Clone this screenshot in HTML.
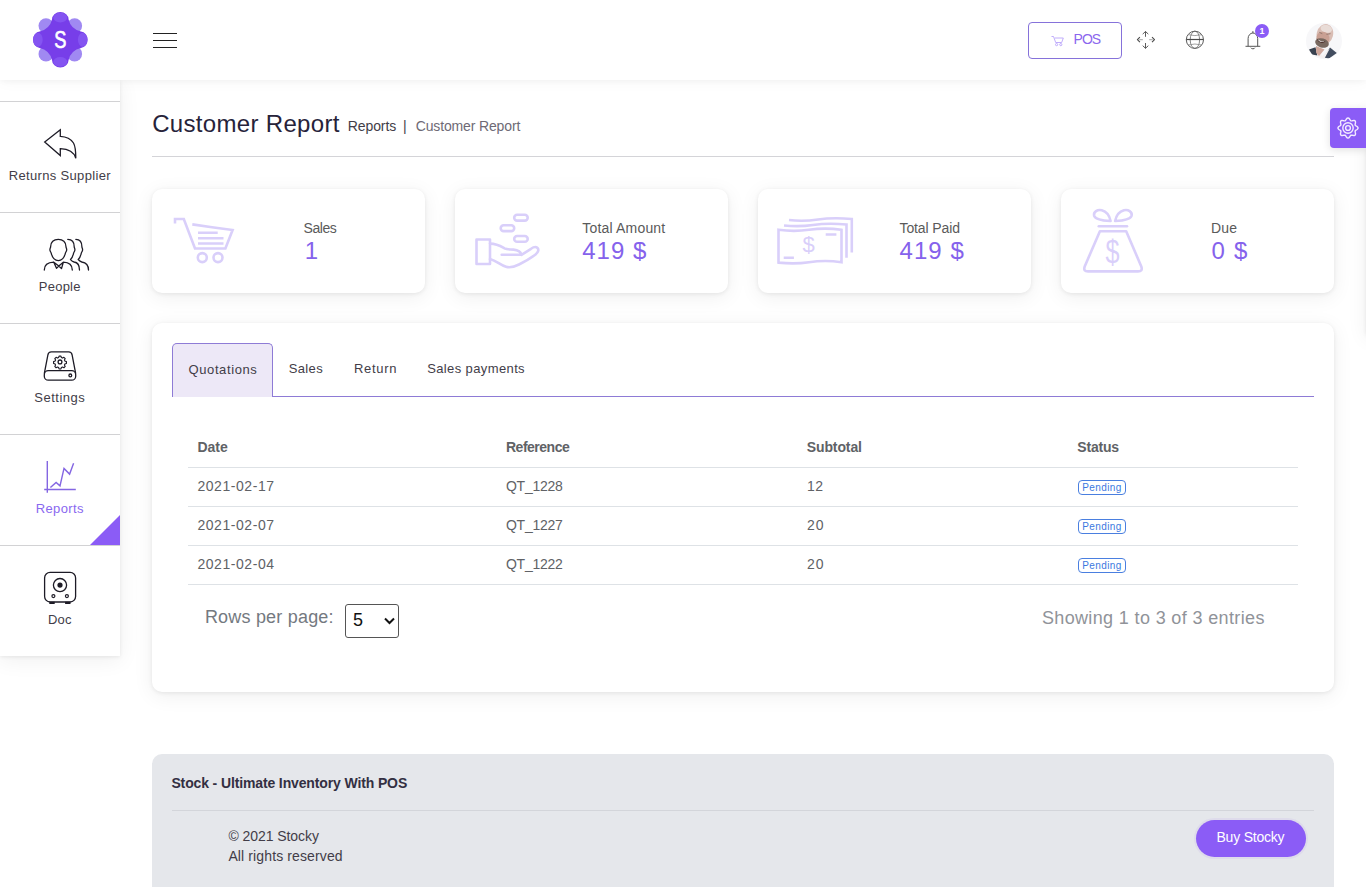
<!DOCTYPE html>
<html lang="en">
<head>
<meta charset="utf-8">
<title>Customer Report - Stocky</title>
<style>
*{box-sizing:border-box;margin:0;padding:0}
html,body{width:1366px;height:887px;overflow:hidden;background:#fff}
body{font-family:"Liberation Sans",sans-serif;color:#332e38;font-size:14px;position:relative}
.abs{position:absolute}
.t{position:absolute;white-space:pre;line-height:1}
/* header */
header{position:absolute;left:0;top:0;width:1366px;height:80px;background:#fff;box-shadow:0 1px 15px rgba(0,0,0,.04),0 1px 6px rgba(0,0,0,.04);z-index:5}
.burger{position:absolute;left:153px;top:32px;width:24px;height:16px}
.burger i{position:absolute;left:0;width:24px;height:1px;background:#222}
.pos{position:absolute;left:1028px;top:22px;width:94px;height:37px;border:1px solid #8672da;border-radius:4px;background:#fff}
.badge1{position:absolute;left:1255px;top:24px;width:14px;height:14px;border-radius:50%;background:#8b5cf6;color:#fff;font-size:9px;font-weight:700;text-align:center;line-height:14px}
/* sidebar */
aside{position:absolute;left:0;top:80px;width:120px;height:576px;background:#fff;box-shadow:0 4px 20px 1px rgba(0,0,0,.06),0 1px 4px rgba(0,0,0,.08);z-index:3;overflow:hidden}
aside ul{list-style:none}
aside .it{position:absolute;left:0;width:120px;height:111px;border-bottom:1px solid #d2d2d4}
aside .tri{position:absolute;right:0;bottom:0;width:0;height:0;border-style:solid;border-width:0 0 30px 30px;border-color:transparent transparent #8b5cf6 transparent}
/* main */
.gearbtn{position:absolute;left:1330px;top:108px;width:36px;height:40px;background:#8b5cf6;border-radius:4px 0 0 4px;box-shadow:0 2px 8px rgba(0,0,0,.12);z-index:4}
.hr{position:absolute;left:152px;top:156px;width:1182px;height:1px;background:#d4d4d8}
.card{position:absolute;background:#fff;border-radius:10px;box-shadow:0 4px 20px 1px rgba(0,0,0,.06),0 1px 4px rgba(0,0,0,.08)}
.stat{top:189px;width:273px;height:104px}
/* tabs */
.tabline{position:absolute;left:273px;top:396px;width:1041px;height:1px;background:#8e7bd6}
.tabact{position:absolute;left:172px;top:343px;width:101px;height:54px;background:#ede8f7;border:1px solid #8e7bd6;border-bottom:0;border-radius:5px 5px 0 0}
/* table */
table{position:absolute;left:188px;top:429px;width:1110px;border-collapse:separate;border-spacing:0;table-layout:fixed;color:#606266;font-size:14px}
th,td{height:39px;border-bottom:1px solid #dee2e6;text-align:left;padding:0;position:relative}
th{font-weight:700}
.pend{position:absolute;width:48px;height:15px;border:1px solid #4a7fe0;border-radius:4px;color:#3b78e0;font-size:10px}
.sel{position:absolute;left:345px;top:604px;width:54px;height:34px;border:1px solid #555;border-radius:3px;background:#fff;-webkit-appearance:none;appearance:none;font:18px "Liberation Sans",sans-serif;color:#111;padding:0 0 2px 7px;margin:0;outline:0}
/* footer */
footer{position:absolute;left:152px;top:754px;width:1182px;height:160px;background:#e5e7eb;border-radius:10px}
.buy{position:absolute;left:1044px;top:66px;width:110px;height:37px;border-radius:19px;background:#8b5cf6;box-shadow:0 0 0 2px rgba(139,92,246,.08)}
</style>
</head>
<body>
<header>
  <svg class="abs" style="left:30px;top:10px" width="60" height="60" viewBox="0 0 60 60">
    <g fill="#a089f2">
      <circle cx="16" cy="15.700" r="7.500"/><circle cx="44.600" cy="15.700" r="7.500"/><circle cx="16" cy="43.900" r="7.500"/><circle cx="44.600" cy="43.900" r="7.500"/>
    </g>
    <path d="M22 9.5A8.3 7.4 0 0 1 38.600 9.500Q40.800 19.200 51 21.500A7.400 8.300 0 0 1 51 38Q40.800 40.300 38.600 50A8.300 7.400 0 0 1 22 50Q19.700 40.300 9.600 38A7.400 8.300 0 0 1 9.600 21.500Q19.700 19.200 22 9.500Z" fill="#773ee9"/>
    <g fill="#8454f1">
      <ellipse cx="30.3" cy="7.6" rx="7" ry="4.8"/><ellipse cx="30.3" cy="51.9" rx="7" ry="4.800"/><ellipse cx="7.900" cy="29.700" rx="4.800" ry="7"/><ellipse cx="52.700" cy="29.700" rx="4.800" ry="7"/>
    </g>
    <text transform="translate(30.400 38.300) scale(.76 1)" text-anchor="middle" font-family="Liberation Sans, sans-serif" font-weight="400" font-size="24" fill="#fff" stroke="#fff" stroke-width=".7" stroke-linejoin="round">S</text>
  </svg>
  <div class="burger"><i style="top:1px"></i><i style="top:8px"></i><i style="top:15px"></i></div>
  <div class="pos">
    <svg class="abs" style="left:22px;top:12px" width="14" height="12" viewBox="0 0 14 12" fill="none" stroke="#b9a4fa" stroke-width=".9">
      <path d="M0.5 1.5h2l2.2 6h6l1.6-4.5h-8.6"/><circle cx="5.6" cy="9.6" r="1.1"/><circle cx="9.8" cy="9.6" r="1.1"/>
    </svg>
    <span class="t" style="left:44.6px;top:9px;font-size:14px;color:#8b66ee;letter-spacing:-1.0px;">POS</span>
  </div>
  <svg class="abs" style="left:1136px;top:30px" width="20" height="20" viewBox="0 0 20 20" fill="none" stroke="#4a4a4a" stroke-width=".9" stroke-linejoin="round">
    <path d="M9.500 1.500v5.300M9.500 13v5.300M6.700 4.100L9.500 1.500l2.800 2.600M6.700 15.700l2.800 2.600 2.800-2.600"/>
    <path d="M3.900 7.200L1.400 9.700l2.500 2.500M16 7.200l2.500 2.500-2.500 2.500" stroke-width="1.100"/>
    <path d="M3.300 9.700h3.500M13.200 9.700h3.500" stroke="#b5b5b5" stroke-width="1.200"/>
  </svg>
  <svg class="abs" style="left:1185px;top:30px" width="20" height="20" viewBox="0 0 20 20" fill="none" stroke="#4a4a4a" stroke-width=".9">
    <circle cx="9.900" cy="9.800" r="8.600"/><ellipse cx="9.900" cy="9.800" rx="4.700" ry="8.600" stroke="#666" stroke-width=".8"/>
    <path d="M1.300 9.500h17.200" stroke-width="1.200"/>
    <path d="M3 4.600Q9.900 6.600 16.800 4.600M3 15Q9.900 13 16.800 15" stroke="#8a8a8a" stroke-width=".8"/>
  </svg>
  <svg class="abs" style="left:1244px;top:29px" width="18" height="22" viewBox="0 0 18 22" fill="none" stroke="#555" stroke-width="1">
    <path d="M1.500 17.300h14.800M4.100 17.300V9.600a4.800 5.600 0 0 1 9.600 0v7.700M8.900 4V2.100M6.900 18.700a2.100 1.600 0 0 0 4 0"/>
  </svg>
  <div class="badge1">1</div>
  <svg class="abs" style="left:1306px;top:23px" width="36" height="36" viewBox="0 0 36 36">
    <defs><clipPath id="av"><circle cx="18" cy="18" r="18"/></clipPath></defs>
    <circle cx="18" cy="18" r="18" fill="#f7f7f9"/>
    <g clip-path="url(#av)">
      <path d="M3 26.500L9.500 24.300L11.500 32.500L6 31.500Z" fill="#39424f"/>
      <path d="M24 24.500L30.800 30L23 35.500L17.500 34.500Z" fill="#424d5f"/>
      <path d="M9.800 25L16.500 33L23.800 25.500L18.500 35.500L12 34Z" fill="#f4f0f0"/>
      <path d="M10 23L18.500 26.500L13 33L10.200 30Z" fill="#cfa79b"/>
      <ellipse cx="18.900" cy="11.200" rx="8.200" ry="10.300" fill="#d9bdb4" transform="rotate(14 18.900 11.200)"/>
      <ellipse cx="20.300" cy="5.800" rx="5.800" ry="3.800" fill="#e9dcd7" transform="rotate(14 20.300 5.800)"/>
      <ellipse cx="17" cy="15" rx="6.600" ry="6.200" fill="#c9a093" transform="rotate(14 17 15)"/>
      <ellipse cx="16" cy="20" rx="7" ry="4.600" fill="#78685f" transform="rotate(16 16 20)"/>
      <path d="M10.500 15.300C12.500 17.300 16 19 19.500 18.300C17 21.200 12 20.300 10.500 15.300Z" fill="#4b302b"/>
      <path d="M11.500 16.300C13.500 17.800 16 18.600 18.500 18.300C16 19.500 13 18.800 11.500 16.300Z" fill="#fff"/>
      <path d="M20.500 11.300l4-.6M13.300 9.300l3 1.400" stroke="#8f746a" stroke-width=".9" fill="none"/>
    </g>
  </svg>
</header>
<aside>
  <nav><ul>
  <li class="it" style="top:-89px"></li>
  <li class="it" style="top:22px">
    <svg class="abs" style="left:42px;top:25px" width="36" height="34" viewBox="0 0 36 34" fill="none" stroke="#1d1b26" stroke-width="1.300" stroke-linejoin="miter">
      <path d="M18.300 2.800 L2.700 15.100 L18.300 28.500 V21.600 C31 21.800 33 28.500 33.800 31.300 C33.800 24 33.200 19 31.500 16 C29 12 24 9.600 18.300 9.300 Z"/>
    </svg>
    <span class="t" style="left:8.7px;top:67px;font-size:13px;color:#423d48;letter-spacing:0.34px;">Returns Supplier</span>
  </li>
  <li class="it" style="top:133px">
    <svg class="abs" style="left:42px;top:23px" width="50" height="36" viewBox="0 0 50 36" fill="none" stroke="#1d1b26" stroke-width="1.300" stroke-linecap="round" stroke-linejoin="round">
      <path d="M16.300 3.400c-4.600 0-7.700 2.600-7.700 7.400 0 1-.7 1.600-.7 2.900 0 1.500 1 2.400 1.300 3.400 .8 3.200 3.200 7.500 7.100 7.500s6.300-4.300 7.100-7.500c.3-1 1.300-1.900 1.300-3.400 0-1.300-.7-1.900-.7-2.900 0-4.800-3.100-7.400-7.700-7.400z"/>
      <path d="M2.300 34.100c0-5 3.500-7.700 9.500-7.900l2.700 6.100 2.300-2.300 2.700 2.600 1.800-6.400c6.500.2 9 2.900 9 7.900M11.800 26.200l5 3.800 4.500-3.800"/>
      <path d="M25.800 3.400c4.200 0 6.400 2.800 6.400 7.400 0 1 .7 1.600.7 2.900 0 1.500-1 2.400-1.300 3.400-.5 2.200-1.400 5-3.100 6.500 1.500 1.700 2.200 2.100 3.600 2.400 4.300.6 5.400 3.600 5.400 8.100"/>
      <path d="M33.900 3.400c4.200 0 6 2.800 6 7.400 0 1 .7 1.600.7 2.900 0 1.500-1 2.400-1.300 3.400-.5 2.200-1.400 4.900-3.100 6.400 1.500 1.700 2.200 2.200 3.600 2.500 4.300.6 6.700 3.600 6.700 8.100"/>
    </svg>
    <span class="t" style="left:38.8px;top:67px;font-size:13px;color:#423d48;letter-spacing:0.24px;">People</span>
  </li>
  <li class="it" style="top:244px">
    <svg class="abs" style="left:42px;top:25px" width="36" height="34" viewBox="0 0 36 34" fill="none" stroke="#1d1b26" stroke-width="1.300" stroke-linejoin="round">
      <path d="M2.300 24.700 L5.900 5.800 Q6.400 2.800 9.400 2.800 H26.600 Q29.600 2.800 30.100 5.800 L33.700 24.700"/>
      <rect x="2.300" y="21.700" width="31.400" height="9.500" rx="4"/>
      <circle cx="28.300" cy="26.400" r="1.400"/>
      <circle cx="18" cy="12.900" r="1.900"/>
      <g transform="translate(18 12.900) scale(.87) translate(-18 -12.900)"><path d="M16.900 6.200h2.200l.5 1.700 1.300.6 1.600-.9 1.500 1.500-.9 1.600.6 1.300 1.700.5v2.200l-1.700.5-.6 1.300.9 1.600-1.500 1.500-1.600-.9-1.300.6-.5 1.700h-2.200l-.5-1.700-1.300-.6-1.600.9-1.500-1.500.9-1.600-.6-1.300-1.700-.5v-2.200l1.700-.5.600-1.300-.9-1.600 1.500-1.500 1.600.9 1.300-.6z"/></g>
    </svg>
    <span class="t" style="left:34.3px;top:67px;font-size:13px;color:#423d48;letter-spacing:0.51px;">Settings</span>
  </li>
  <li class="it" style="top:355px">
    <svg class="abs" style="left:42px;top:23px" width="36" height="36" viewBox="0 0 36 36" fill="none" stroke="#8466e2" stroke-width="1.400" stroke-linejoin="miter">
      <path d="M5.300 3.100V34.700M2.200 31.500H33.800"/>
      <path d="M8.400 29.600 L14.100 24.500 L18 27.900 L22 10.400 L27.600 16.100 L31.600 5.300"/>
    </svg>
    <span class="t" style="left:35.7px;top:67px;font-size:13px;color:#8968f0;letter-spacing:0.4px;">Reports</span>
    <div class="tri"></div>
  </li>
  <li class="it" style="top:466px">
    <svg class="abs" style="left:42px;top:25px" width="36" height="34" viewBox="0 0 36 34" fill="none" stroke="#1d1b26" stroke-width="1.300">
      <rect x="2.600" y="1.400" width="31" height="29.600" rx="5.500"/>
      <circle cx="18" cy="14.100" r="6.600"/><circle cx="18" cy="14.100" r="2.600" fill="#1d1b26" stroke="none"/>
      <circle cx="11.400" cy="25.100" r="1.500" stroke-width="1.200"/><circle cx="24.900" cy="25.100" r="1.500" stroke-width="1.200"/>
      <path d="M7.300 31.900h5.400M23.100 31.900h5.400" stroke-width="2.200"/>
    </svg>
    <span class="t" style="left:47.9px;top:67px;font-size:13px;color:#423d48;letter-spacing:0.25px;">Doc</span>
  </li>
  </ul></nav>
</aside>
<main>
  <h1 style="font-weight:400"><span class="t" style="left:152.2px;top:112px;font-size:24px;color:#27233a;letter-spacing:0.32px;">Customer Report</span></h1>
  <span class="t" style="left:347.8px;top:119px;font-size:14px;color:#423d48;letter-spacing:-0.1px;">Reports</span><span class="t" style="left:402.9px;top:119px;font-size:14px;color:#423d48;">|</span><span class="t" style="left:415.7px;top:119px;font-size:14px;color:#6e6a75;letter-spacing:-0.14px;">Customer Report</span>
  <div class="hr"></div>
  <div class="abs" style="left:1366px;top:108px;width:60px;height:226px;background:#fff;box-shadow:0 4px 20px 1px rgba(0,0,0,.06),0 1px 4px rgba(0,0,0,.08)"></div>
  <div class="gearbtn">
    <svg class="abs" style="left:7px;top:9px" width="22" height="22" viewBox="0 0 22 22" fill="none" stroke="#f3ecff" stroke-width="1.400" stroke-linejoin="round">
      <path d="M11.00 0.95 L11.65 1.13 L12.24 1.61 L12.74 2.27 L13.15 2.96 L13.54 3.52 L13.97 3.84 L14.50 3.91 L15.16 3.79 L15.94 3.60 L16.77 3.48 L17.52 3.56 L18.11 3.89 L18.44 4.48 L18.52 5.23 L18.40 6.06 L18.21 6.84 L18.09 7.50 L18.16 8.03 L18.48 8.46 L19.04 8.85 L19.73 9.26 L20.39 9.76 L20.87 10.35 L21.05 11.00 L20.87 11.65 L20.39 12.24 L19.73 12.74 L19.04 13.15 L18.48 13.54 L18.16 13.97 L18.09 14.50 L18.21 15.16 L18.40 15.94 L18.52 16.77 L18.44 17.52 L18.11 18.11 L17.52 18.44 L16.77 18.52 L15.94 18.40 L15.16 18.21 L14.50 18.09 L13.97 18.16 L13.54 18.48 L13.15 19.04 L12.74 19.73 L12.24 20.39 L11.65 20.87 L11.00 21.05 L10.35 20.87 L9.76 20.39 L9.26 19.73 L8.85 19.04 L8.46 18.48 L8.03 18.16 L7.50 18.09 L6.84 18.21 L6.06 18.40 L5.23 18.52 L4.48 18.44 L3.89 18.11 L3.56 17.52 L3.48 16.77 L3.60 15.94 L3.79 15.16 L3.91 14.50 L3.84 13.97 L3.52 13.54 L2.96 13.15 L2.27 12.74 L1.61 12.24 L1.13 11.65 L0.95 11.00 L1.13 10.35 L1.61 9.76 L2.27 9.26 L2.96 8.85 L3.52 8.46 L3.84 8.03 L3.91 7.50 L3.79 6.84 L3.60 6.06 L3.48 5.23 L3.56 4.48 L3.89 3.89 L4.48 3.56 L5.23 3.48 L6.06 3.60 L6.84 3.79 L7.50 3.91 L8.03 3.84 L8.46 3.52 L8.85 2.96 L9.26 2.27 L9.76 1.61 L10.35 1.13Z"/>
      <circle cx="11" cy="11" r="5.200"/><circle cx="11" cy="11" r="2.400"/>
    </svg>
  </div>
  <section class="card stat" style="left:152px">
    <svg class="abs" style="left:20px;top:27px" width="64" height="50" viewBox="0 0 64 50" fill="none" stroke="#d9cffa" stroke-width="2.600" stroke-linejoin="miter">
      <path d="M3 7.600V3H11.800L23 32.500H53.400L60.600 14L40 11.200L20.300 8.400"/>
      <path d="M26 16.800H45.700M26 22.300H51.500M26 27.500H51.500"/>
      <circle cx="30.300" cy="41.600" r="4.500"/><circle cx="46" cy="41.600" r="4.500"/>
    </svg>
    <span class="t" style="left:151.5px;top:32px;font-size:14px;color:#5a5a5a;letter-spacing:-0.45px;">Sales</span><span class="t" style="left:152.7px;top:50px;font-size:24px;color:#8562ec;">1</span>
  </section>
  <section class="card stat" style="left:455px">
    <svg class="abs" style="left:18px;top:21px" width="70" height="60" viewBox="0 0 70 60" fill="none" stroke="#d9cffa" stroke-width="2.600" stroke-linejoin="round" stroke-linecap="round">
      <rect x="3.500" y="29.500" width="13.500" height="24.500"/>
      <rect x="41.200" y="4.800" width="13.500" height="5.800" rx="2.900"/><rect x="27.700" y="15.300" width="13.500" height="5.800" rx="2.900"/><rect x="41.200" y="26" width="13.500" height="5.800" rx="2.900"/>
      <path d="M17 33.600C24 33.600 27.500 36 31.500 38.400C34 39.800 37 39.300 40.500 39.600C45 40 48.500 42 48 44.800H28.700"/>
      <path d="M17 49C24 51 27 55 33 56.800C37 58 41 57 46 54.500C52 51.500 58 48 62.500 44.500C65.500 42 66 39.500 64.500 38C63 36.500 60.500 37 58 38.800L48.500 44.800"/>
    </svg>
    <span class="t" style="left:127.3px;top:32px;font-size:14px;color:#5a5a5a;letter-spacing:0.18px;">Total Amount</span><span class="t" style="left:127.2px;top:50px;font-size:24px;color:#8562ec;letter-spacing:1.02px;">419 $</span>
  </section>
  <section class="card stat" style="left:758px">
    <svg class="abs" style="left:18px;top:25px" width="80" height="54" viewBox="0 0 80 54" fill="none" stroke="#d9cffa" stroke-width="2.600" stroke-linejoin="miter">
      <path d="M2.500 15.800C13 17.300 23 17.300 33 15.800C43 14.300 54 14.100 65.500 15.800V48.200C54 46.500 43 46.700 33 48.200C23 49.700 13 49.700 2.500 48.600Z"/>
      <path d="M8 11.500C18 12.500 27 12.500 37 11C47 9.500 58 9.300 70.500 10.500V43.700"/>
      <path d="M13 6C23 7.300 32 7 42 5.500C52 4 63 3.800 75.800 5V38.600"/>
      <path d="M49.700 20.500H60.400M7.700 43.700H17.900"/>
    </svg>
    <span class="t" style="left:44.600px;top:45.100px;font-size:22px;color:#d9cffa">$</span>
    <span class="t" style="left:141.5px;top:32px;font-size:14px;color:#5a5a5a;letter-spacing:-0.11px;">Total Paid</span><span class="t" style="left:141.6px;top:50px;font-size:24px;color:#8562ec;letter-spacing:1.02px;">419 $</span>
  </section>
  <section class="card stat" style="left:1061px">
    <svg class="abs" style="left:20px;top:17px" width="64" height="70" viewBox="0 0 64 70" fill="none" stroke="#d9cffa" stroke-width="2.600" stroke-linejoin="round" stroke-linecap="round">
      <path d="M18.900 25.200H45.200L60.300 60.500Q62 65.400 57 65.400H7Q2 65.400 3.700 60.500Z"/>
      <path d="M17.800 20.300H46"/>
      <path d="M29.600 15C20 14.500 14 13 13.100 9.600C12.300 5.800 16.500 3.200 20.800 4.300C25.500 5.500 28.500 10 29.600 15Z"/>
      <path d="M34.100 15C43.700 14.500 49.700 13 50.600 9.600C51.400 5.800 47.200 3.200 42.900 4.300C38.200 5.500 35.200 10 34.100 15Z"/>
    </svg>
    <span class="t" style="left:42.450px;top:45.200px;font-size:34px;color:#d9cffa;transform:scaleX(.74)">$</span>
    <span class="t" style="left:150.1px;top:32px;font-size:14px;color:#5a5a5a;letter-spacing:0.1px;">Due</span><span class="t" style="left:150.5px;top:50px;font-size:24px;color:#8562ec;letter-spacing:1.25px;">0 $</span>
  </section>
  <section class="card" style="left:152px;top:323px;width:1182px;height:369px"></section>
  <div class="tabact"></div><div class="tabline"></div>
  <span class="t" style="left:188.5px;top:363px;font-size:13px;color:#423d48;letter-spacing:0.61px;">Quotations</span><span class="t" style="left:288.7px;top:362px;font-size:13px;color:#423d48;letter-spacing:0.38px;">Sales</span><span class="t" style="left:354.0px;top:362px;font-size:13px;color:#423d48;letter-spacing:0.68px;">Return</span><span class="t" style="left:427.2px;top:362px;font-size:13px;color:#423d48;letter-spacing:0.38px;">Sales payments</span>
  <table>
    <colgroup><col style="width:309px"><col style="width:300px"><col style="width:271px"><col style="width:230px"></colgroup>
    <thead>
    <tr><th><span class="t" style="left:9.4px;top:11px;font-size:14px;color:#606266;font-weight:700;">Date</span></th><th><span class="t" style="left:9.0px;top:11px;font-size:14px;color:#606266;font-weight:700;letter-spacing:-0.5px;">Reference</span></th><th><span class="t" style="left:9.7px;top:11px;font-size:14px;color:#606266;font-weight:700;letter-spacing:-0.1px;">Subtotal</span></th><th><span class="t" style="left:9.3px;top:11px;font-size:14px;color:#606266;font-weight:700;letter-spacing:-0.2px;">Status</span></th></tr>
    </thead>
    <tbody>
    <tr><td><span class="t" style="left:9.4px;top:11px;font-size:14px;color:#606266;letter-spacing:0.56px;">2021-02-17</span></td><td><span class="t" style="left:9.0px;top:11px;font-size:14px;color:#606266;letter-spacing:-0.28px;">QT_1228</span></td><td><span class="t" style="left:10.0px;top:11px;font-size:14px;color:#606266;letter-spacing:0.4px;">12</span></td><td><span class="pend" style="left:10px;top:12px"></span><span class="t" style="left:14.3px;top:15px;font-size:10px;color:#3b78e0;letter-spacing:0.37px;">Pending</span></td></tr>
    <tr><td><span class="t" style="left:9.4px;top:11px;font-size:14px;color:#606266;letter-spacing:0.56px;">2021-02-07</span></td><td><span class="t" style="left:9.0px;top:11px;font-size:14px;color:#606266;letter-spacing:-0.28px;">QT_1227</span></td><td><span class="t" style="left:10.0px;top:11px;font-size:14px;color:#606266;letter-spacing:0.9px;">20</span></td><td><span class="pend" style="left:10px;top:12px"></span><span class="t" style="left:14.3px;top:15px;font-size:10px;color:#3b78e0;letter-spacing:0.37px;">Pending</span></td></tr>
    <tr><td><span class="t" style="left:9.4px;top:11px;font-size:14px;color:#606266;letter-spacing:0.56px;">2021-02-04</span></td><td><span class="t" style="left:9.0px;top:11px;font-size:14px;color:#606266;letter-spacing:-0.28px;">QT_1222</span></td><td><span class="t" style="left:10.0px;top:11px;font-size:14px;color:#606266;letter-spacing:0.9px;">20</span></td><td><span class="pend" style="left:10px;top:12px"></span><span class="t" style="left:14.3px;top:15px;font-size:10px;color:#3b78e0;letter-spacing:0.37px;">Pending</span></td></tr>
    </tbody>
  </table>
  <span class="t" style="left:204.9px;top:608px;font-size:18px;color:#747980;letter-spacing:0.2px;">Rows per page:</span>
  <select class="sel" aria-label="Rows per page"><option>5</option><option>10</option><option>20</option></select>
  <svg class="abs" style="left:383.500px;top:617px" width="11" height="8" viewBox="0 0 11 8" fill="none" stroke="#111" stroke-width="2"><path d="M1 1.500l4.500 4.500 4.500-4.500"/></svg>
  <span class="t" style="left:1041.9px;top:609px;font-size:18px;color:#909399;letter-spacing:0.36px;">Showing 1 to 3 of 3 entries</span>
</main>
<footer>
  <span class="t" style="left:19.4px;top:22px;font-size:14px;color:#332f42;font-weight:700;letter-spacing:-0.13px;">Stock - Ultimate Inventory With POS</span>
  <div class="abs" style="left:20px;top:56px;width:1142px;height:1px;background:#d3d5da"></div>
  <span class="t" style="left:76.4px;top:75px;font-size:14px;color:#423d48;letter-spacing:-0.06px;">© 2021 Stocky</span><span class="t" style="left:76.4px;top:95px;font-size:14px;color:#423d48;letter-spacing:0.12px;">All rights reserved</span>
  <div class="buy"></div>
  <span class="t" style="left:1064.5px;top:76px;font-size:14px;color:#fff;letter-spacing:-0.22px;">Buy Stocky</span>
</footer>
</body>
</html>
